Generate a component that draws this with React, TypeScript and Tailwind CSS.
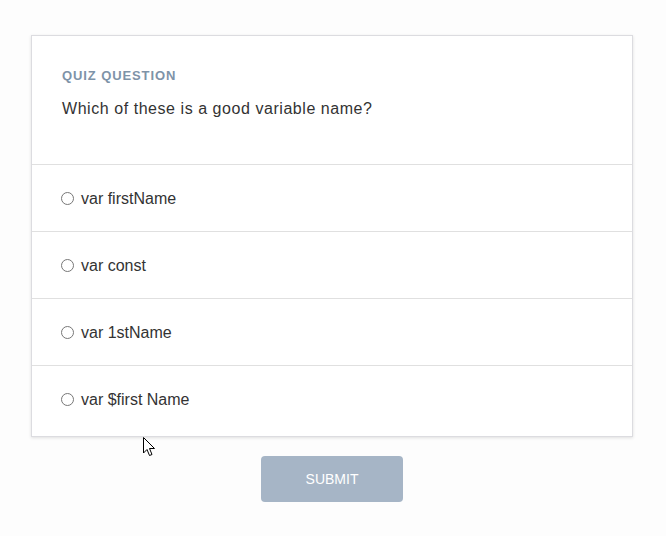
import React from "react";

const options = ["var firstName", "var const", "var 1stName", "var $first Name"];

export default function App() {
  return (
    <div
      className="relative w-[666px] h-[536px] bg-[#fdfdfd] pt-[35px]"
      style={{ fontFamily: '"Liberation Sans", Arial, sans-serif' }}
    >
      <div className="ml-[31px] w-[602px] bg-white border border-[#dcdce0] shadow-[0_1px_3px_rgba(0,0,0,0.12)]">
        <div className="h-[129px] px-[30px] pt-[33px] border-b border-[#e0e0e0]">
          <div className="text-[13px] font-bold tracking-[0.9px] text-[#7e93a8] leading-[14px]">
            QUIZ QUESTION
          </div>
          <div className="mt-[16px] text-[16px] text-[#333] leading-[20px] tracking-[0.55px]">
            Which of these is a good variable name?
          </div>
        </div>
        {options.map((o, i) => (
          <div
            key={o}
            className={`flex items-center px-[29px] ${i < options.length - 1 ? "h-[67px] pt-[2px] border-b border-[#e0e0e0]" : "h-[70px] pb-[2px]"}`}
          >
            <span className="w-[13px] h-[13px] rounded-full border border-[#777] mr-[7px] mt-[-2px]" />
            <span className="text-[16px] text-[#333] leading-[20px]">{o}</span>
          </div>
        ))}
      </div>
      <div className="flex mt-[19px] ml-[261px]">
        <button className="w-[142px] h-[46px] rounded-[4px] bg-[#a6b5c6] text-white text-[14px]">
          SUBMIT
        </button>
      </div>
      <svg
        className="absolute left-[143px] top-[437px]"
        width="13"
        height="21"
        viewBox="0 0 13 21"
      >
        <path
          d="M0.5 0.5 L0.5 16 L4 12.5 L6.5 18.5 L9 17.5 L6.5 11.5 L11.5 11.5 Z"
          fill="white"
          stroke="black"
          strokeWidth="1"
        />
      </svg>
    </div>
  );
}
